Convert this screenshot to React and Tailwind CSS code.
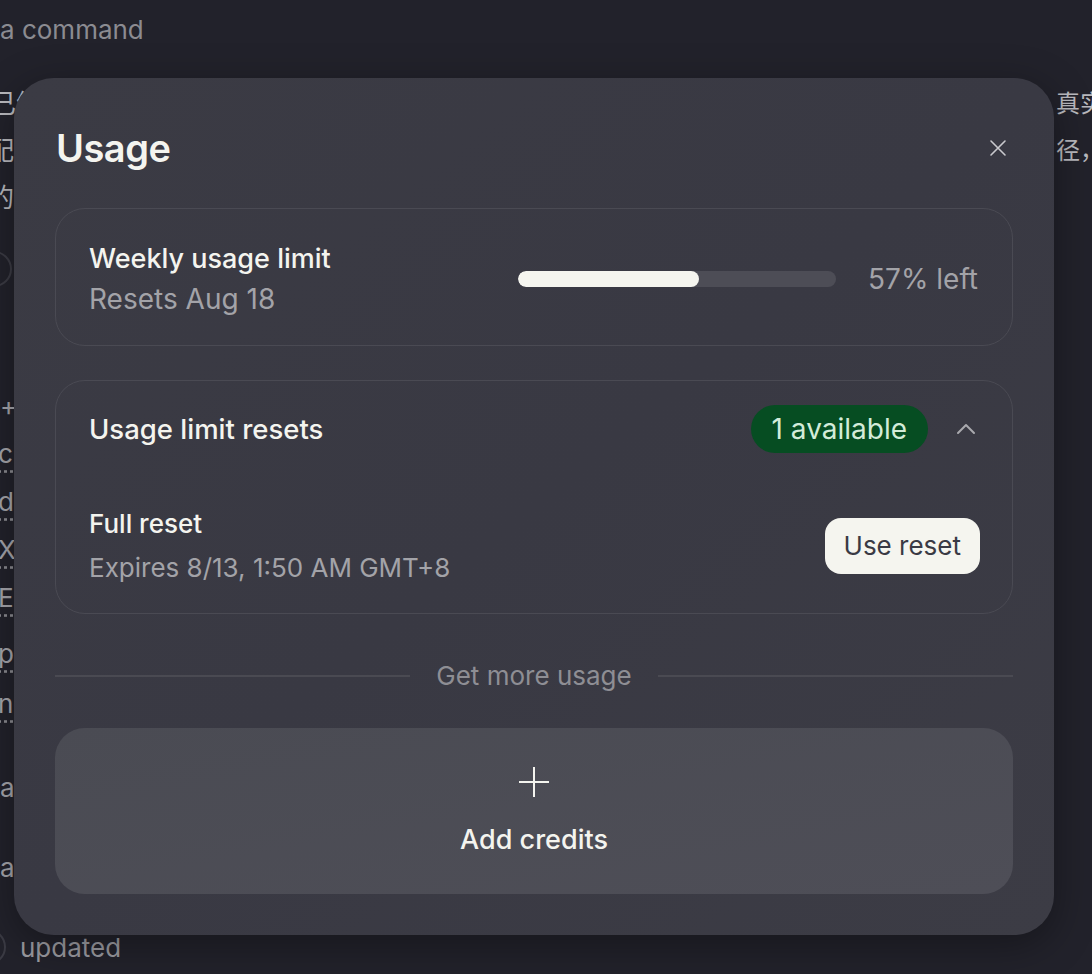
import React from 'react';

const sideLinks = [
  { text: '+', link: false },
  { text: 'ck', link: true },
  { text: 'd-', link: true },
  { text: 'XT', link: true },
  { text: 'E.', link: true },
  { text: 'pa', link: true, extra: 'mt-[8px]' },
  { text: 'nc', link: true, extra: 'mt-[2px]' },
  { text: 'a', link: false, extra: 'mt-[36px]' },
  { text: 'ac', link: false, extra: 'mt-[32px]' },
];

function CloseIcon() {
  return (
    <svg width="18" height="18" viewBox="0 0 18 18" fill="none" stroke="#c9c9cd" strokeWidth="1.6" strokeLinecap="round">
      <path d="M2 2 L16 16 M16 2 L2 16" />
    </svg>
  );
}

function ChevronUp() {
  return (
    <svg width="20" height="12" viewBox="0 0 20 12" fill="none" stroke="#a9a9ae" strokeWidth="2" strokeLinecap="round" strokeLinejoin="round">
      <path d="M2 10 L10 2 L18 10" />
    </svg>
  );
}

function PlusIcon() {
  return (
    <svg width="32" height="32" viewBox="0 0 32 32" fill="none" stroke="#f4f4ef" strokeWidth="2">
      <path d="M16 1 V31 M1 16 H31" />
    </svg>
  );
}

// page behind the dialog
function Backdrop() {
  return (
    <div className="flex flex-col text-[26px] text-[#b9b9be]">
      <div className="h-[58px] flex items-center text-[#8b8b91]">a command</div>
      <div className="mt-[22px] flex h-[47px] items-center justify-between">
        <span className="-ml-[10px]">已经</span>
        <span className="w-[36px] overflow-hidden whitespace-nowrap text-[24px]">真实现</span>
      </div>
      <div className="flex h-[47px] items-center justify-between">
        <span className="-ml-[12px]">配套</span>
        <span className="w-[36px] overflow-hidden whitespace-nowrap text-[24px]">径，的</span>
      </div>
      <div className="flex h-[47px] items-center">
        <span className="-ml-[12px]">的，</span>
      </div>
      <div className="mt-[30px] h-[36px] w-[36px] -ml-[24px] rounded-full border-2 border-[#3b3b44]" />
      <div className="flex flex-col">
        {sideLinks.map((item, i) => (
          <div
            key={i}
            className={`flex h-[48px] items-center ${i === 0 ? 'mt-[94px]' : ''} ${item.extra || ''}`}
          >
            <span
              className={
                item.link
                  ? '-ml-[2px] text-[#a5a5ab] underline decoration-dotted decoration-[#8a8a90] underline-offset-[8px]'
                  : 'text-[#a5a5ab]'
              }
            >
              {item.text}
            </span>
          </div>
        ))}
      </div>
      <div className="mt-[36px] flex h-[40px] items-center gap-[14px] text-[#9b9ba1]">
        <span className="-ml-[30px] h-[36px] w-[36px] rounded-full border-2 border-[#3b3b44]" />
        <span>updated</span>
      </div>
    </div>
  );
}

export default function App() {
  const percentLeft = 57;

  return (
    <div
      className="relative h-[974px] w-[1092px] overflow-hidden bg-[#22222b]"
      style={{ fontFamily: 'Inter, "Noto Sans CJK SC", sans-serif' }}
    >
      <Backdrop />

      {/* Usage dialog */}
      <div className="absolute left-[14px] top-[78px] flex h-[857px] w-[1040px] flex-col rounded-[40px] bg-gradient-to-br from-[#3b3b44] via-[#393943] to-[#3c3c45] px-[41px] pb-[41px] pt-[44px] shadow-[0_10px_40px_rgba(0,0,0,0.35)]">
        <div className="flex h-[52px] items-center justify-between">
          <h1 className="pl-[1px] text-[38px] font-semibold tracking-[-0.5px] text-[#f4f4ef]">Usage</h1>
          <button className="mr-[3px] flex h-[24px] w-[24px] items-center justify-center">
            <CloseIcon />
          </button>
        </div>

        {/* weekly limit */}
        <div className="mt-[34px] flex h-[138px] items-center rounded-[30px] border border-[#4a4a53] px-[33px] pt-[4px]">
          <div className="flex flex-col">
            <span className="text-[27px] leading-[40px] font-medium text-[#f4f4ef]">Weekly usage limit</span>
            <span className="text-[28px] leading-[40px] text-[#a3a3a8]">Resets Aug 18</span>
          </div>
          <div className="ml-auto flex items-center gap-[32px]">
            <div className="h-[16px] w-[318px] overflow-hidden rounded-full bg-[#4d4d56]">
              <div className="h-full rounded-full bg-[#f5f5ef]" style={{ width: `${percentLeft}%` }} />
            </div>
            <span className="mr-[1px] text-[28px] text-[#a3a3a8]">{percentLeft}% left</span>
          </div>
        </div>

        {/* resets */}
        <div className="mt-[34px] flex flex-col rounded-[30px] border border-[#4a4a53] px-[33px] pb-[25px] pt-[24px]">
          <div className="flex h-[48px] items-center">
            <span className="pt-[3px] text-[27.5px] font-medium text-[#f4f4ef]">Usage limit resets</span>
            <span className="ml-auto flex h-[48px] items-center rounded-full bg-[#064d22] px-[21px] pt-[1px] text-[28px] text-[#d3ecd9]">
              1 available
            </span>
            <span className="ml-[28px] mr-[3px] flex items-center">
              <ChevronUp />
            </span>
          </div>
          <div className="mt-[51px] flex items-center">
            <div className="flex flex-col gap-[4px]">
              <span className="text-[26px] leading-[40px] font-medium text-[#f4f4ef]">Full reset</span>
              <span className="text-[26px] leading-[40px] text-[#a3a3a8]">Expires 8/13, 1:50 AM GMT+8</span>
            </div>
            <button className="ml-auto mr-[-1px] h-[56px] rounded-[16px] bg-[#f5f5ef] px-[19px] text-[26px] text-[#3a3a44]">
              Use reset
            </button>
          </div>
        </div>

        {/* divider */}
        <div className="mt-[46px] flex h-[32px] items-center gap-[26px]">
          <div className="h-[2px] flex-1 bg-[#4a4a52]" />
          <span className="text-[26px] text-[#8e8e94]">Get more usage</span>
          <div className="h-[2px] flex-1 bg-[#4a4a52]" />
        </div>

        <button className="mt-[36px] flex h-[167px] flex-col items-center justify-center rounded-[30px] bg-gradient-to-br from-[#4a4b53] to-[#4e4e57] pt-[4px]">
          <PlusIcon />
          <span className="mt-[22px] text-[27px] font-medium text-[#f4f4ef]">Add credits</span>
        </button>
      </div>
    </div>
  );
}
